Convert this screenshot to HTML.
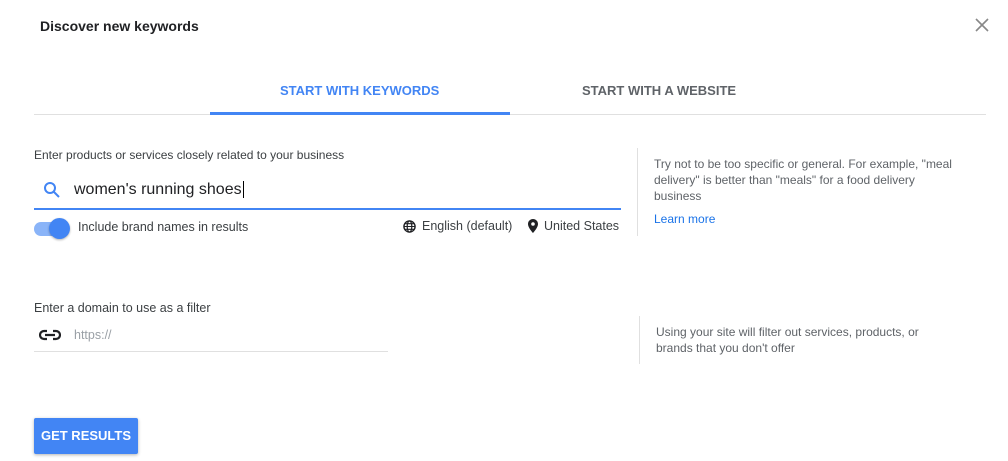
<!DOCTYPE html>
<html><head><style>
*{margin:0;padding:0;box-sizing:border-box}
body{width:1008px;height:461px;background:#fff;font-family:"Liberation Sans",Arial,sans-serif;position:relative;overflow:hidden;color:#202124}
.a{position:absolute;white-space:nowrap}
</style></head><body>
<div class="a" style="left:40px;top:18px;font-size:14px;font-weight:bold">Discover new keywords</div>
<svg class="a" style="left:974px;top:17px" width="16" height="16" viewBox="0 0 16 16"><path d="M2 2L14 14M14 2L2 14" stroke="#888" stroke-width="1.6"/></svg>
<div class="a" style="left:280px;top:83px;font-size:13px;font-weight:bold;color:#4285f4">START WITH KEYWORDS</div>
<div class="a" style="left:582px;top:83px;font-size:13px;font-weight:bold;color:#5f6368">START WITH A WEBSITE</div>
<div class="a" style="left:34px;top:114px;width:952px;height:1px;background:#e0e0e0"></div>
<div class="a" style="left:210px;top:112px;width:300px;height:3px;background:#4285f4"></div>
<div class="a" style="left:34px;top:148px;font-size:12px;color:#3c4043">Enter products or services closely related to your business</div>
<svg class="a" style="left:43px;top:181px" width="18" height="18" viewBox="0 0 18 18"><circle cx="7" cy="7" r="5" stroke="#4285f4" stroke-width="2" fill="none"/><path d="M11 11L16 16" stroke="#4285f4" stroke-width="2"/></svg>
<div class="a" style="left:74px;top:181px;font-size:16px;color:#202124">women's running shoes<span style="border-right:1px solid #000;margin-left:1px"></span></div>
<div class="a" style="left:34px;top:208px;width:587px;height:2px;background:#4285f4"></div>
<div class="a" style="left:34px;top:222px;width:34px;height:14px;border-radius:7px;background:#8ab4f8"></div>
<div class="a" style="left:49px;top:218px;width:21px;height:21px;border-radius:50%;background:#4285f4;box-shadow:0 1px 2px rgba(0,0,0,.3)"></div>
<div class="a" style="left:78px;top:220px;font-size:12.5px;color:#3c4043">Include brand names in results</div>
<svg class="a" style="left:403px;top:220px" width="13" height="13" viewBox="0 0 14 14"><circle cx="7" cy="7" r="6" fill="none" stroke="#202124" stroke-width="1.5"/><ellipse cx="7" cy="7" rx="2.5" ry="6" fill="none" stroke="#202124" stroke-width="1.3"/><path d="M1 7H13M2 4H12M2 10H12" stroke="#202124" stroke-width="1.2"/></svg>
<div class="a" style="left:422px;top:219px;font-size:12.5px;color:#3c4043">English (default)</div>
<svg class="a" style="left:528px;top:219px" width="10" height="14" viewBox="0 0 10 14"><path d="M5 0C2.2 0 0 2.2 0 5c0 3.7 5 9 5 9s5-5.3 5-9C10 2.2 7.8 0 5 0zm0 6.8A1.8 1.8 0 1 1 5 3.2a1.8 1.8 0 0 1 0 3.6z" fill="#202124"/></svg>
<div class="a" style="left:544px;top:219px;font-size:12.5px;color:#3c4043">United States</div>
<div class="a" style="left:637px;top:148px;width:1px;height:88px;background:#e0e0e0"></div>
<div class="a" style="left:654px;top:156px;font-size:12px;line-height:16px;color:#5f6368">Try not to be too specific or general. For example, "meal<br>delivery" is better than "meals" for a food delivery<br>business</div>
<div class="a" style="left:654px;top:212px;font-size:12px;color:#1a73e8">Learn more</div>
<div class="a" style="left:34px;top:301px;font-size:12.5px;color:#3c4043">Enter a domain to use as a filter</div>
<svg class="a" style="left:39px;top:329px" width="22" height="12" viewBox="0 0 22 12"><path d="M8 2H5a4 4 0 0 0 0 8h3M14 2h3a4 4 0 0 1 0 8h-3M6 6H16" stroke="#202124" stroke-width="2.2" fill="none"/></svg>
<div class="a" style="left:74px;top:328px;font-size:12.5px;color:#9aa0a6">https://</div>
<div class="a" style="left:34px;top:351px;width:354px;height:1px;background:#e0e0e0"></div>
<div class="a" style="left:639px;top:316px;width:1px;height:48px;background:#e0e0e0"></div>
<div class="a" style="left:656px;top:324px;font-size:12px;line-height:16px;color:#5f6368">Using your site will filter out services, products, or<br>brands that you don't offer</div>
<div class="a" style="left:34px;top:418px;width:104px;height:36px;background:#4285f4;border-radius:2px;box-shadow:0 1px 3px rgba(0,0,0,.3);color:#fff;font-size:13px;font-weight:bold;line-height:36px;text-align:center">GET RESULTS</div>
</body></html>
